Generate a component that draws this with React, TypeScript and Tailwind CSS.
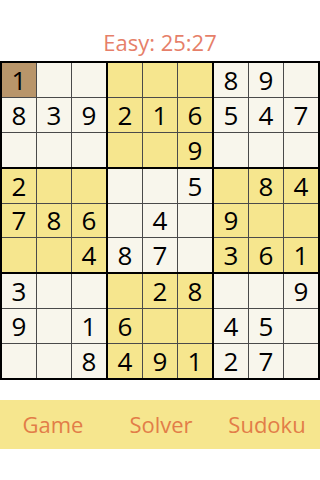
import React from 'react';

const rows: string[] = [
  '1.....89.',
  '839216547',
  '.....9...',
  '2....5.84',
  '786.4.9..',
  '..487.361',
  '3...28..9',
  '9.16..45.',
  '..849127.',
];

const Cell: React.FC<{ r: number; c: number }> = ({ r, c }) => {
  const ch = rows[r][c];
  const block = Math.floor(r / 3) * 3 + Math.floor(c / 3);
  const yellow = block % 2 === 1;
  const selected = r === 0 && c === 0;
  const bg = selected ? 'bg-[#b8956a]' : yellow ? 'bg-[#f6e68e]' : 'bg-[#f8f6ec]';
  return (
    <div className={`${bg} flex items-center justify-center text-[26px] leading-none text-black`}>
      {ch === '.' ? '' : ch}
    </div>
  );
};

export default function App() {
  const blocks = [0, 1, 2, 3, 4, 5, 6, 7, 8];
  return (
    <div className="w-[320px] h-[480px] bg-white flex flex-col" style={{ fontFamily: '"Open Sans", "Noto Sans", sans-serif' }}>
      <div className="h-[61px] flex items-end justify-center pb-[2px] text-[22px] text-[#e67f69]">
        Easy: 25:27
      </div>
      <div className="w-[320px] h-[319px] bg-black p-[2px] grid grid-cols-3 grid-rows-3 gap-[2px]">
        {blocks.map((b) => {
          const br = Math.floor(b / 3);
          const bc = b % 3;
          return (
            <div key={b} className="grid grid-cols-3 grid-rows-3 gap-px bg-[#4a4a4a]">
              {[0, 1, 2, 3, 4, 5, 6, 7, 8].map((i) => (
                <Cell key={i} r={br * 3 + Math.floor(i / 3)} c={bc * 3 + (i % 3)} />
              ))}
            </div>
          );
        })}
      </div>
      <div className="mt-[20px] h-[49px] bg-[#f6e68e] flex items-center text-[22px] text-[#e27d48]">
        <div className="flex-1 text-center pr-[2px]">Game</div>
        <div className="flex-1 text-center">Solver</div>
        <div className="flex-1 text-center">Sudoku</div>
      </div>
    </div>
  );
}
